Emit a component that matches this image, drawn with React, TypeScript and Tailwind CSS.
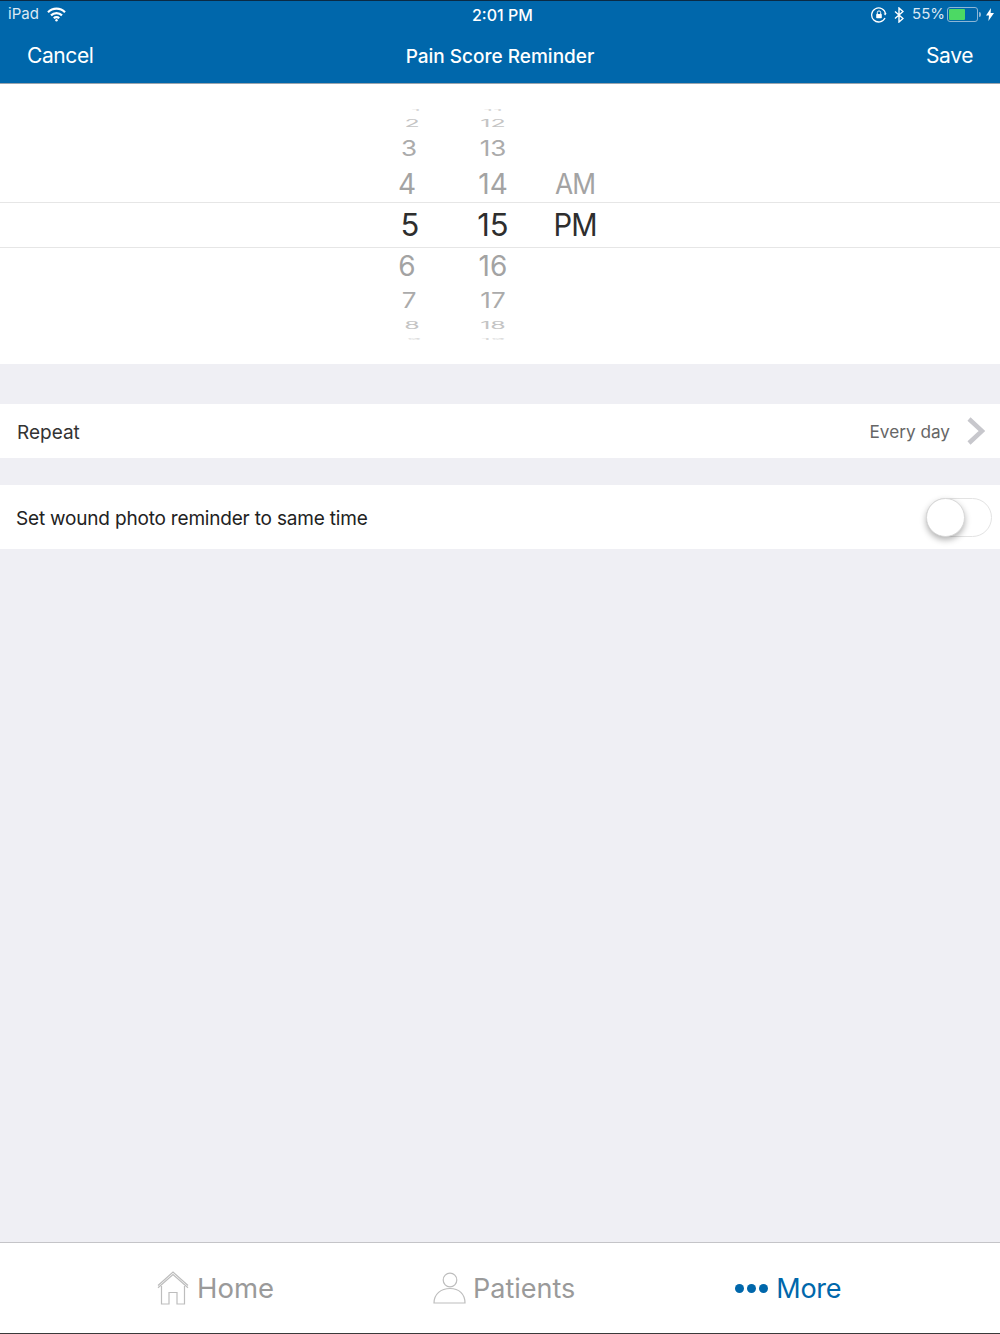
const FONT = "font-['Inter','Liberation_Sans',sans-serif]";

interface WheelRow {
  hour: string;
  minute: string;
  suffix?: string;
  rowClass: string;
  textClass: string;
  hourClass: string;
}

const rows: WheelRow[] = [
  { hour: '1', minute: '11', rowClass: 'h-[8px]', textClass: 'text-[24px] text-[#d8d8d8] scale-y-[0.1]', hourClass: 'left-[416px]' },
  { hour: '2', minute: '12', rowClass: 'h-[17px]', textClass: 'text-[25px] text-[#c4c4c4] scale-y-[0.42]', hourClass: 'left-[412px]' },
  { hour: '3', minute: '13', rowClass: 'h-[35px]', textClass: 'text-[26px] text-[#ababab] scale-y-[0.82]', hourClass: 'left-[409px]' },
  { hour: '4', minute: '14', suffix: 'AM', rowClass: 'h-[36px]', textClass: 'text-[28px] text-[#a3a3a3]', hourClass: 'left-[407px]' },
  { hour: '5', minute: '15', suffix: 'PM', rowClass: 'h-[46px] border-y border-[#e6e6e6]', textClass: 'text-[31px] text-[#2e2e2e] -mt-px', hourClass: 'left-[410px]' },
  { hour: '6', minute: '16', rowClass: 'h-[36px]', textClass: 'text-[28px] text-[#a3a3a3] -mt-[0.5px]', hourClass: 'left-[407px]' },
  { hour: '7', minute: '17', rowClass: 'h-[33px]', textClass: 'text-[26px] text-[#ababab] scale-y-[0.82]', hourClass: 'left-[409px]' },
  { hour: '8', minute: '18', rowClass: 'h-[18px]', textClass: 'text-[25px] text-[#c4c4c4] scale-y-[0.42] -mt-px', hourClass: 'left-[412px]' },
  { hour: '9', minute: '19', rowClass: 'h-[8px]', textClass: 'text-[24px] text-[#d8d8d8] scale-y-[0.1]', hourClass: 'left-[414px]' },
];

function Wheel() {
  return (
    <div className="h-[280px] bg-white pt-[22px]">
      {rows.map((row) => (
        <div key={row.minute} className={`relative ${row.rowClass}`}>
          <span className={`absolute top-1/2 -translate-x-1/2 -translate-y-1/2 leading-none ${row.hourClass} ${row.textClass}`}>
            {row.hour}
          </span>
          <span className={`absolute top-1/2 left-[493px] -translate-x-1/2 -translate-y-1/2 leading-none ${row.textClass}`}>
            {row.minute}
          </span>
          {row.suffix && (
            <span className={`absolute top-1/2 left-[575px] -translate-x-1/2 -translate-y-1/2 scale-x-[0.94] leading-none tracking-[-1px] ${row.textClass}`}>
              {row.suffix}
            </span>
          )}
        </div>
      ))}
    </div>
  );
}

function StatusBar() {
  return (
    <div className="relative flex h-[27px] items-center justify-between pl-[8px] pr-[6px] text-[15px] text-white">
      <div className="flex items-center gap-[8px]">
        <span className="text-[#dce9f4]">iPad</span>
        <svg width="19" height="15" viewBox="0 0 19 15" fill="none" stroke="white" strokeWidth="2.2">
          <path d="M1 5.2a12 12 0 0 1 17 0" />
          <path d="M4 8.4a7.8 7.8 0 0 1 11 0" />
          <path d="M6.8 11.2a3.8 3.8 0 0 1 5.4 0" />
          <circle cx="9.5" cy="13.3" r="1.2" fill="white" stroke="none" />
        </svg>
      </div>
      <span className="absolute left-[472px] top-[2px] text-[16px] font-medium">2:01 PM</span>
      <div className="flex items-center">
        <svg width="16" height="16" viewBox="0 0 16 16" fill="none" stroke="white" strokeWidth="1.3" className="mr-[7px]">
          <path d="M14 11a7 7 0 1 1 .6-4" />
          <path d="M12.6 6.4h3l-1.5 2z" fill="white" stroke="none" />
          <rect x="5.2" y="7" width="5.6" height="4.2" rx="0.6" fill="white" stroke="none" />
          <path d="M6.3 7V5.6a1.7 1.7 0 0 1 3.4 0V7" strokeWidth="1" />
        </svg>
        <svg width="10" height="16" viewBox="0 0 10 16" fill="none" stroke="white" strokeWidth="1.4" className="mr-[8px]">
          <path d="M1 4.5l8 7-4 3.5V1l4 3.5-8 7" />
        </svg>
        <span className="mr-[2px] text-[#dce9f4]">55%</span>
        <div className="mr-[1px] flex h-[15px] w-[31px] items-center rounded-[3px] border border-[#8db6d6] p-[1px]">
          <div className="h-full w-[16px] rounded-[1px] bg-[#4cd964]" />
        </div>
        <div className="mr-[5px] h-[5px] w-[2px] rounded-r-sm bg-[#8db6d6]" />
        <svg width="8" height="13" viewBox="0 0 8 13" fill="white">
          <path d="M5 0L0 7.5h3L2.4 13 8 5H4.6z" />
        </svg>
      </div>
    </div>
  );
}

function Header() {
  return (
    <div className="h-[84px] shrink-0 border-t border-[#0a2a44] border-b border-b-[#9aa4ad] bg-[#0067ab]">
      <StatusBar />
      <div className="flex h-[55px] items-center pl-[27px] pr-[27px] pb-[1px] text-white">
        <span className="mt-[2px] flex-1 text-[21px] tracking-[-0.4px]">Cancel</span>
        <span className="mt-[4px] text-[19px] font-medium">Pain Score Reminder</span>
        <span className="mt-[2px] flex-1 text-right text-[21px] tracking-[-0.4px]">Save</span>
      </div>
    </div>
  );
}

function TabBar() {
  return (
    <div className="flex h-[92px] shrink-0 items-center border-t border-[#c4c4c8] border-b border-b-[#3a3a3a] bg-white text-[27.5px]">
      <div className="ml-[157px] flex items-center gap-[8px] text-[#9a9a9a]">
        <svg width="32" height="34" viewBox="0 0 32 34" fill="none" stroke="#bdbdbd" strokeWidth="1.2">
          <path d="M1 14.5L16 1l15 13.5" />
          <path d="M1 16.8L16 3.6l15 13.2" />
          <path d="M4.5 15v18h7.5V21.5h8V33h7.5V15" />
        </svg>
        <span className="mt-[2px]">Home</span>
      </div>
      <div className="ml-[159px] flex items-center gap-[7px] text-[#9a9a9a]">
        <svg width="33" height="32" viewBox="0 0 33 32" fill="none" stroke="#bdbdbd" strokeWidth="1.2">
          <circle cx="17" cy="8" r="6.8" />
          <path d="M1 31c0-9 7-14.5 16-14.5S32 22 32 31z" />
        </svg>
        <span className="mt-[2px] text-[27px]">Patients</span>
      </div>
      <div className="ml-[160px] flex items-center gap-[8px] text-[#0067ab]">
        <div className="flex gap-[3px]">
          <div className="h-[9px] w-[9px] rounded-full bg-[#0067ab]" />
          <div className="h-[9px] w-[9px] rounded-full bg-[#0067ab]" />
          <div className="h-[9px] w-[9px] rounded-full bg-[#0067ab]" />
        </div>
        <span className="mt-[2px] text-[27px] tracking-[-0.3px]">More</span>
      </div>
    </div>
  );
}

export default function App() {
  return (
    <div className={`flex h-[1334px] w-[1000px] flex-col overflow-hidden bg-[#efeff4] ${FONT}`}>
      <Header />
      <Wheel />
      <div className="mt-[40px] flex h-[54px] items-center justify-between bg-white pl-[17px] pr-[15px]">
        <span className="mt-[4px] text-[19px] text-[#333333]">Repeat</span>
        <div className="flex items-center gap-[17px]">
          <span className="mt-[2px] text-[17.2px] text-[#666666]">Every day</span>
          <svg width="18" height="28" viewBox="0 0 18 28" fill="none" stroke="#c7c7cc" strokeWidth="4.5">
            <path d="M2 2l13 12L2 26" />
          </svg>
        </div>
      </div>
      <div className="mt-[27px] flex h-[64px] items-center justify-between bg-white pl-[16px] pr-[8px]">
        <span className="mt-[4px] text-[19px] tracking-[-0.19px] text-[#222222]">Set wound photo reminder to same time</span>
        <div className="relative h-[39px] w-[66px] rounded-full border border-[#e3e3e3] bg-white">
          <div className="absolute -left-[1px] -top-[1px] h-[39px] w-[39px] rounded-full border border-[#d8d8d8] bg-white shadow-[0_3px_6px_rgba(0,0,0,0.3)]" />
        </div>
      </div>
      <div className="flex-1" />
      <TabBar />
    </div>
  );
}
